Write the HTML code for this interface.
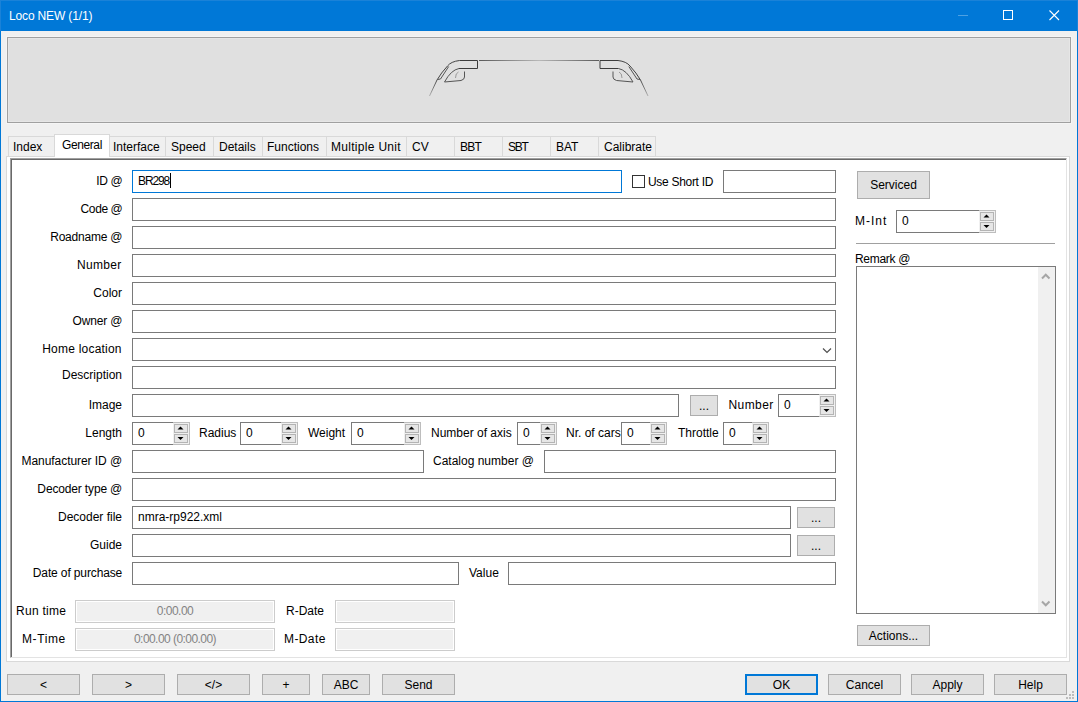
<!DOCTYPE html>
<html><head><meta charset="utf-8"><style>
html,body{margin:0;padding:0;width:1078px;height:702px;overflow:hidden;background:#f0f0f0}
body>div,body>svg{position:absolute;box-sizing:border-box}
.t{font-family:"Liberation Sans",sans-serif;font-size:12px;line-height:14px;color:#000;white-space:nowrap}
</style></head><body>
<div style="left:0px;top:0px;width:1078px;height:702px;background:#f0f0f0;border:1px solid #0078d7;"></div>
<div style="left:0px;top:0px;width:1078px;height:31px;background:#0078d7;border:1px solid #1a82d8;border-bottom:none;"></div>
<div class="t" style="left:9px;top:9px;color:#fff;letter-spacing:-0.15px;">Loco NEW (1/1)</div>
<div style="left:958px;top:15px;width:10px;height:1px;background:#4da1e3;"></div>
<div style="left:1003px;top:10px;width:10px;height:10px;border:1px solid #fff;"></div>
<svg style="left:1049px;top:10px" width="11" height="11"><path d="M0.5 0.5 L10 10 M10 0.5 L0.5 10" stroke="#fff" stroke-width="1.1"/></svg>
<div style="left:6px;top:36px;width:1066px;height:88px;border:1px solid #f5f5f5;"></div>
<div style="left:7px;top:37px;width:1064px;height:86px;background:#e0e0e0;border:1px solid #a0a0a0;box-shadow:inset 0 0 0 1px #e6e6e6;"></div>
<svg style="left:420px;top:50px" width="240" height="55" viewBox="420 50 240 55">
<defs><linearGradient id="rg" gradientUnits="userSpaceOnUse" x1="479" y1="0" x2="599" y2="0"><stop offset="0" stop-color="#5a5a5a"/><stop offset="0.5" stop-color="#b8b8b8"/><stop offset="1" stop-color="#5a5a5a"/></linearGradient>
<linearGradient id="fd" gradientUnits="userSpaceOnUse" x1="0" y1="78" x2="0" y2="96"><stop offset="0" stop-color="#3a3a3a"/><stop offset="1" stop-color="#b0b0b0"/></linearGradient></defs>
<path d="M479 60.5 L599 60.5" stroke="url(#rg)" stroke-width="1" fill="none"/>
<g id="lh" fill="none" stroke="#4a4a4a" stroke-width="1">
<path d="M459.5 60.5 L477.5 60.5 L477.5 68.5 L459 68.5" stroke="#3c3c3c"/>
<path d="M459 68.5 Q451 70 444.5 82 L461 80.5 Q464.5 79.5 464.5 77 L464.5 71.5" stroke="#555"/>
<path d="M458.5 72 Q455.5 73 455.5 78" stroke="#9a9a9a"/>
<path d="M459.5 60.5 Q451 61.5 447.5 66 Q441 73 437 80" stroke="#444"/>
<path d="M437 80 L429.5 96" stroke="url(#fd)"/>
<path d="M448.7 66.5 L440.5 79 L437.5 79.5" stroke="#555"/>
</g>
<use href="#lh" transform="translate(1077.5 0) scale(-1 1)"/>
</svg>
<div style="left:6px;top:156px;width:1064px;height:506px;background:#fff;border:1px solid #d9d9d9;"></div>
<div style="left:8px;top:136px;width:47px;height:21px;background:#f0f0f0;border:1px solid #d9d9d9;"></div>
<div class="t" style="left:13px;top:140px;">Index</div>
<div style="left:109px;top:136px;width:57px;height:21px;background:#f0f0f0;border:1px solid #d9d9d9;"></div>
<div class="t" style="left:113px;top:140px;">Interface</div>
<div style="left:165px;top:136px;width:49px;height:21px;background:#f0f0f0;border:1px solid #d9d9d9;"></div>
<div class="t" style="left:171px;top:140px;">Speed</div>
<div style="left:213px;top:136px;width:50px;height:21px;background:#f0f0f0;border:1px solid #d9d9d9;"></div>
<div class="t" style="left:219px;top:140px;">Details</div>
<div style="left:262px;top:136px;width:65px;height:21px;background:#f0f0f0;border:1px solid #d9d9d9;"></div>
<div class="t" style="left:267px;top:140px;">Functions</div>
<div style="left:326px;top:136px;width:81px;height:21px;background:#f0f0f0;border:1px solid #d9d9d9;"></div>
<div class="t" style="left:331px;top:140px;letter-spacing:0.3px">Multiple Unit</div>
<div style="left:406px;top:136px;width:49px;height:21px;background:#f0f0f0;border:1px solid #d9d9d9;"></div>
<div class="t" style="left:412px;top:140px;">CV</div>
<div style="left:454px;top:136px;width:49px;height:21px;background:#f0f0f0;border:1px solid #d9d9d9;"></div>
<div class="t" style="left:460px;top:140px;letter-spacing:-0.8px">BBT</div>
<div style="left:502px;top:136px;width:49px;height:21px;background:#f0f0f0;border:1px solid #d9d9d9;"></div>
<div class="t" style="left:508px;top:140px;letter-spacing:-1.2px">SBT</div>
<div style="left:550px;top:136px;width:49px;height:21px;background:#f0f0f0;border:1px solid #d9d9d9;"></div>
<div class="t" style="left:556px;top:140px;">BAT</div>
<div style="left:598px;top:136px;width:58px;height:21px;background:#f0f0f0;border:1px solid #d9d9d9;"></div>
<div class="t" style="left:604px;top:140px;">Calibrate</div>
<div style="left:54px;top:134px;width:56px;height:23px;background:#fff;border:1px solid #d9d9d9;border-bottom:none;"></div>
<div class="t" style="left:62px;top:138px;letter-spacing:-0.4px">General</div>
<div style="left:10px;top:158px;width:1057px;height:500px;border-left:1px solid #a0a0a0;border-top:1px solid #a0a0a0;border-right:1px solid #e3e3e3;border-bottom:1px solid #e3e3e3;"></div>
<div style="left:11px;top:159px;width:1055px;height:498px;border-left:1px solid #696969;border-top:1px solid #696969;"></div>
<div class="t" style="right:955.67px;top:174px;text-align:right;letter-spacing:-0.33px">ID @</div>
<div class="t" style="right:955.6px;top:202px;text-align:right;letter-spacing:-0.4px">Code @</div>
<div class="t" style="right:955.78px;top:230px;text-align:right;letter-spacing:-0.22px">Roadname @</div>
<div class="t" style="right:956.35px;top:258px;text-align:right;letter-spacing:0.35px">Number</div>
<div class="t" style="right:956px;top:286px;text-align:right;">Color</div>
<div class="t" style="right:955.83px;top:314px;text-align:right;letter-spacing:-0.17px">Owner @</div>
<div class="t" style="right:956.22px;top:342px;text-align:right;letter-spacing:0.22px">Home location</div>
<div class="t" style="right:956px;top:368px;text-align:right;">Description</div>
<div class="t" style="right:956px;top:398px;text-align:right;">Image</div>
<div class="t" style="right:956px;top:426px;text-align:right;">Length</div>
<div class="t" style="right:955.94px;top:454px;text-align:right;letter-spacing:-0.06px">Manufacturer ID @</div>
<div class="t" style="right:955.85px;top:482px;text-align:right;letter-spacing:-0.15px">Decoder type @</div>
<div class="t" style="right:956px;top:510px;text-align:right;">Decoder file</div>
<div class="t" style="right:956px;top:538px;text-align:right;">Guide</div>
<div class="t" style="right:955.87px;top:566px;text-align:right;letter-spacing:-0.13px">Date of purchase</div>
<div style="left:132px;top:170px;width:490px;height:23px;border:1px solid #7a7a7a;background:#fff;border-color:#0078d7;"></div>
<div class="t" style="left:138px;top:174px;letter-spacing:-1.1px">BR298</div>
<div style="left:170px;top:173px;width:1px;height:15px;background:#000;"></div>
<div style="left:632px;top:175px;width:13px;height:13px;border:1px solid #333;background:#fff;"></div>
<div class="t" style="left:648px;top:175px;letter-spacing:-0.3px">Use Short ID</div>
<div style="left:723px;top:170px;width:113px;height:23px;border:1px solid #7a7a7a;background:#fff;"></div>
<div style="left:132px;top:198px;width:704px;height:23px;border:1px solid #7a7a7a;background:#fff;"></div>
<div style="left:132px;top:226px;width:704px;height:23px;border:1px solid #7a7a7a;background:#fff;"></div>
<div style="left:132px;top:254px;width:704px;height:23px;border:1px solid #7a7a7a;background:#fff;"></div>
<div style="left:132px;top:282px;width:704px;height:23px;border:1px solid #7a7a7a;background:#fff;"></div>
<div style="left:132px;top:310px;width:704px;height:23px;border:1px solid #7a7a7a;background:#fff;"></div>
<div style="left:132px;top:366px;width:704px;height:23px;border:1px solid #7a7a7a;background:#fff;"></div>
<div style="left:132px;top:338px;width:704px;height:23px;border:1px solid #7a7a7a;background:#fff;"></div>
<svg style="left:822px;top:347px" width="11" height="7"><path d="M1 1.5 L5 5.5 L9 1.5" fill="none" stroke="#505050" stroke-width="1.2"/></svg>
<div style="left:132px;top:394px;width:547px;height:23px;border:1px solid #7a7a7a;background:#fff;"></div>
<div style="left:690px;top:395px;width:28px;height:21px;border:1px solid #adadad;background:#e1e1e1;"></div>
<div class="t" style="left:690px;width:28px;top:399px;text-align:center;">...</div>
<div class="t" style="right:304.4px;top:398px;text-align:right;letter-spacing:0.4px">Number</div>
<div style="left:778px;top:394px;width:58px;height:23px;border:1px solid #7a7a7a;background:#fff;"></div>
<div style="left:819px;top:394px;width:17px;height:23px;border:1px solid #bdbdbd;border-left:none;background:#f0f0f0;"></div>
<div style="left:820px;top:396px;width:14px;height:9px;border:1px solid #b4b4b4;background:#e6e6e6;"></div>
<div style="left:820px;top:406px;width:14px;height:9px;border:1px solid #b4b4b4;background:#e6e6e6;"></div>
<svg style="left:820px;top:396px" width="14" height="9"><path d="M3.5 5.5 L9.5 5.5 L6.5 2.5 Z" fill="#000"/></svg>
<svg style="left:820px;top:406px" width="14" height="9"><path d="M3.5 3 L9.5 3 L6.5 6 Z" fill="#000"/></svg>
<div class="t" style="left:784px;top:398px;">0</div>
<div style="left:132px;top:422px;width:58px;height:23px;border:1px solid #7a7a7a;background:#fff;"></div>
<div style="left:173px;top:422px;width:17px;height:23px;border:1px solid #bdbdbd;border-left:none;background:#f0f0f0;"></div>
<div style="left:174px;top:424px;width:14px;height:9px;border:1px solid #b4b4b4;background:#e6e6e6;"></div>
<div style="left:174px;top:434px;width:14px;height:9px;border:1px solid #b4b4b4;background:#e6e6e6;"></div>
<svg style="left:174px;top:424px" width="14" height="9"><path d="M3.5 5.5 L9.5 5.5 L6.5 2.5 Z" fill="#000"/></svg>
<svg style="left:174px;top:434px" width="14" height="9"><path d="M3.5 3 L9.5 3 L6.5 6 Z" fill="#000"/></svg>
<div class="t" style="left:138px;top:426px;">0</div>
<div class="t" style="left:199px;top:426px;">Radius</div>
<div style="left:240px;top:422px;width:58px;height:23px;border:1px solid #7a7a7a;background:#fff;"></div>
<div style="left:281px;top:422px;width:17px;height:23px;border:1px solid #bdbdbd;border-left:none;background:#f0f0f0;"></div>
<div style="left:282px;top:424px;width:14px;height:9px;border:1px solid #b4b4b4;background:#e6e6e6;"></div>
<div style="left:282px;top:434px;width:14px;height:9px;border:1px solid #b4b4b4;background:#e6e6e6;"></div>
<svg style="left:282px;top:424px" width="14" height="9"><path d="M3.5 5.5 L9.5 5.5 L6.5 2.5 Z" fill="#000"/></svg>
<svg style="left:282px;top:434px" width="14" height="9"><path d="M3.5 3 L9.5 3 L6.5 6 Z" fill="#000"/></svg>
<div class="t" style="left:246px;top:426px;">0</div>
<div class="t" style="left:308px;top:426px;">Weight</div>
<div style="left:351px;top:422px;width:70px;height:23px;border:1px solid #7a7a7a;background:#fff;"></div>
<div style="left:404px;top:422px;width:17px;height:23px;border:1px solid #bdbdbd;border-left:none;background:#f0f0f0;"></div>
<div style="left:405px;top:424px;width:14px;height:9px;border:1px solid #b4b4b4;background:#e6e6e6;"></div>
<div style="left:405px;top:434px;width:14px;height:9px;border:1px solid #b4b4b4;background:#e6e6e6;"></div>
<svg style="left:405px;top:424px" width="14" height="9"><path d="M3.5 5.5 L9.5 5.5 L6.5 2.5 Z" fill="#000"/></svg>
<svg style="left:405px;top:434px" width="14" height="9"><path d="M3.5 3 L9.5 3 L6.5 6 Z" fill="#000"/></svg>
<div class="t" style="left:357px;top:426px;">0</div>
<div class="t" style="left:431px;top:426px;">Number of axis</div>
<div style="left:517px;top:422px;width:40px;height:23px;border:1px solid #7a7a7a;background:#fff;"></div>
<div style="left:540px;top:422px;width:17px;height:23px;border:1px solid #bdbdbd;border-left:none;background:#f0f0f0;"></div>
<div style="left:541px;top:424px;width:14px;height:9px;border:1px solid #b4b4b4;background:#e6e6e6;"></div>
<div style="left:541px;top:434px;width:14px;height:9px;border:1px solid #b4b4b4;background:#e6e6e6;"></div>
<svg style="left:541px;top:424px" width="14" height="9"><path d="M3.5 5.5 L9.5 5.5 L6.5 2.5 Z" fill="#000"/></svg>
<svg style="left:541px;top:434px" width="14" height="9"><path d="M3.5 3 L9.5 3 L6.5 6 Z" fill="#000"/></svg>
<div class="t" style="left:523px;top:426px;">0</div>
<div class="t" style="left:566px;top:426px;width:55px;overflow:hidden">Nr. of cars</div>
<div style="left:621px;top:422px;width:46px;height:23px;border:1px solid #7a7a7a;background:#fff;"></div>
<div style="left:650px;top:422px;width:17px;height:23px;border:1px solid #bdbdbd;border-left:none;background:#f0f0f0;"></div>
<div style="left:651px;top:424px;width:14px;height:9px;border:1px solid #b4b4b4;background:#e6e6e6;"></div>
<div style="left:651px;top:434px;width:14px;height:9px;border:1px solid #b4b4b4;background:#e6e6e6;"></div>
<svg style="left:651px;top:424px" width="14" height="9"><path d="M3.5 5.5 L9.5 5.5 L6.5 2.5 Z" fill="#000"/></svg>
<svg style="left:651px;top:434px" width="14" height="9"><path d="M3.5 3 L9.5 3 L6.5 6 Z" fill="#000"/></svg>
<div class="t" style="left:627px;top:426px;">0</div>
<div class="t" style="left:678px;top:426px;">Throttle</div>
<div style="left:723px;top:422px;width:46px;height:23px;border:1px solid #7a7a7a;background:#fff;"></div>
<div style="left:752px;top:422px;width:17px;height:23px;border:1px solid #bdbdbd;border-left:none;background:#f0f0f0;"></div>
<div style="left:753px;top:424px;width:14px;height:9px;border:1px solid #b4b4b4;background:#e6e6e6;"></div>
<div style="left:753px;top:434px;width:14px;height:9px;border:1px solid #b4b4b4;background:#e6e6e6;"></div>
<svg style="left:753px;top:424px" width="14" height="9"><path d="M3.5 5.5 L9.5 5.5 L6.5 2.5 Z" fill="#000"/></svg>
<svg style="left:753px;top:434px" width="14" height="9"><path d="M3.5 3 L9.5 3 L6.5 6 Z" fill="#000"/></svg>
<div class="t" style="left:729px;top:426px;">0</div>
<div style="left:132px;top:450px;width:292px;height:23px;border:1px solid #7a7a7a;background:#fff;"></div>
<div class="t" style="left:433px;top:454px;">Catalog number @</div>
<div style="left:544px;top:450px;width:292px;height:23px;border:1px solid #7a7a7a;background:#fff;"></div>
<div style="left:132px;top:478px;width:704px;height:23px;border:1px solid #7a7a7a;background:#fff;"></div>
<div style="left:132px;top:506px;width:659px;height:23px;border:1px solid #7a7a7a;background:#fff;"></div>
<div class="t" style="left:138px;top:510px;">nmra-rp922.xml</div>
<div style="left:797px;top:507px;width:38px;height:21px;border:1px solid #adadad;background:#e1e1e1;"></div>
<div class="t" style="left:797px;width:38px;top:511px;text-align:center;">...</div>
<div style="left:132px;top:534px;width:659px;height:23px;border:1px solid #7a7a7a;background:#fff;"></div>
<div style="left:797px;top:535px;width:38px;height:21px;border:1px solid #adadad;background:#e1e1e1;"></div>
<div class="t" style="left:797px;width:38px;top:539px;text-align:center;">...</div>
<div style="left:132px;top:562px;width:327px;height:23px;border:1px solid #7a7a7a;background:#fff;"></div>
<div class="t" style="left:469px;top:566px;">Value</div>
<div style="left:508px;top:562px;width:328px;height:23px;border:1px solid #7a7a7a;background:#fff;"></div>
<div class="t" style="left:16px;top:604px;letter-spacing:0.28px">Run time</div>
<div style="left:75px;top:600px;width:200px;height:23px;border:1px solid #cccccc;background:#f0f0f0;box-shadow:inset 0 0 0 1px #fff;"></div>
<div class="t" style="left:75px;width:200px;top:604px;text-align:center;color:#838383;letter-spacing:-0.5px;">0:00.00</div>
<div class="t" style="left:286px;top:604px;">R-Date</div>
<div style="left:335px;top:600px;width:120px;height:23px;border:1px solid #cccccc;background:#f0f0f0;box-shadow:inset 0 0 0 1px #fff;"></div>
<div class="t" style="left:22px;top:632px;letter-spacing:0.6px">M-Time</div>
<div style="left:75px;top:628px;width:200px;height:23px;border:1px solid #cccccc;background:#f0f0f0;box-shadow:inset 0 0 0 1px #fff;"></div>
<div class="t" style="left:75px;width:200px;top:632px;text-align:center;color:#838383;letter-spacing:-0.55px;">0:00.00 (0:00.00)</div>
<div class="t" style="left:284px;top:632px;letter-spacing:0.4px">M-Date</div>
<div style="left:335px;top:628px;width:120px;height:23px;border:1px solid #cccccc;background:#f0f0f0;box-shadow:inset 0 0 0 1px #fff;"></div>
<div style="left:857px;top:171px;width:73px;height:28px;border:1px solid #adadad;background:#e1e1e1;"></div>
<div class="t" style="left:857px;width:73px;top:178px;text-align:center;">Serviced</div>
<div class="t" style="left:855px;top:214px;letter-spacing:1px">M-Int</div>
<div style="left:896px;top:210px;width:100px;height:23px;border:1px solid #7a7a7a;background:#fff;"></div>
<div style="left:979px;top:210px;width:17px;height:23px;border:1px solid #bdbdbd;border-left:none;background:#f0f0f0;"></div>
<div style="left:980px;top:212px;width:14px;height:9px;border:1px solid #b4b4b4;background:#e6e6e6;"></div>
<div style="left:980px;top:222px;width:14px;height:9px;border:1px solid #b4b4b4;background:#e6e6e6;"></div>
<svg style="left:980px;top:212px" width="14" height="9"><path d="M3.5 5.5 L9.5 5.5 L6.5 2.5 Z" fill="#000"/></svg>
<svg style="left:980px;top:222px" width="14" height="9"><path d="M3.5 3 L9.5 3 L6.5 6 Z" fill="#000"/></svg>
<div class="t" style="left:902px;top:214px;">0</div>
<div style="left:856px;top:243px;width:199px;height:1px;background:#a0a0a0;"></div>
<div class="t" style="left:855px;top:252px;letter-spacing:-0.3px">Remark @</div>
<div style="left:856px;top:266px;width:200px;height:348px;border:1px solid #7a7a7a;background:#fff;"></div>
<div style="left:1038px;top:267px;width:17px;height:346px;background:#f0f0f0;"></div>
<svg style="left:1041px;top:273px" width="10" height="7"><path d="M1 5.5 L4.75 1.75 L8.5 5.5" fill="none" stroke="#a6a6a6" stroke-width="2"/></svg>
<svg style="left:1041px;top:600px" width="10" height="7"><path d="M1 1.5 L4.75 5.25 L8.5 1.5" fill="none" stroke="#a6a6a6" stroke-width="2"/></svg>
<div style="left:857px;top:625px;width:73px;height:21px;border:1px solid #adadad;background:#e1e1e1;"></div>
<div class="t" style="left:857px;width:73px;top:629px;text-align:center;">Actions...</div>
<div style="left:7px;top:674px;width:73px;height:21px;border:1px solid #adadad;background:#e1e1e1;"></div>
<div class="t" style="left:7px;width:73px;top:678px;text-align:center;">&lt;</div>
<div style="left:92px;top:674px;width:73px;height:21px;border:1px solid #adadad;background:#e1e1e1;"></div>
<div class="t" style="left:92px;width:73px;top:678px;text-align:center;">&gt;</div>
<div style="left:177px;top:674px;width:73px;height:21px;border:1px solid #adadad;background:#e1e1e1;"></div>
<div class="t" style="left:177px;width:73px;top:678px;text-align:center;">&lt;/&gt;</div>
<div style="left:262px;top:674px;width:48px;height:21px;border:1px solid #adadad;background:#e1e1e1;"></div>
<div class="t" style="left:262px;width:48px;top:678px;text-align:center;">+</div>
<div style="left:322px;top:674px;width:48px;height:21px;border:1px solid #adadad;background:#e1e1e1;"></div>
<div class="t" style="left:322px;width:48px;top:678px;text-align:center;">ABC</div>
<div style="left:382px;top:674px;width:73px;height:21px;border:1px solid #adadad;background:#e1e1e1;"></div>
<div class="t" style="left:382px;width:73px;top:678px;text-align:center;">Send</div>
<div style="left:828px;top:674px;width:73px;height:21px;border:1px solid #adadad;background:#e1e1e1;"></div>
<div class="t" style="left:828px;width:73px;top:678px;text-align:center;">Cancel</div>
<div style="left:911px;top:674px;width:73px;height:21px;border:1px solid #adadad;background:#e1e1e1;"></div>
<div class="t" style="left:911px;width:73px;top:678px;text-align:center;">Apply</div>
<div style="left:994px;top:674px;width:73px;height:21px;border:1px solid #adadad;background:#e1e1e1;"></div>
<div class="t" style="left:994px;width:73px;top:678px;text-align:center;">Help</div>
<div style="left:745px;top:674px;width:73px;height:21px;border:2px solid #0078d7;background:#e1e1e1;"></div>
<div class="t" style="left:745px;width:73px;top:678px;text-align:center;">OK</div>
<div style="left:1072px;top:691px;width:2px;height:2px;background:#bcbcbc;"></div>
<div style="left:1069px;top:694px;width:2px;height:2px;background:#bcbcbc;"></div>
<div style="left:1072px;top:694px;width:2px;height:2px;background:#bcbcbc;"></div>
<div style="left:1066px;top:697px;width:2px;height:2px;background:#bcbcbc;"></div>
<div style="left:1069px;top:697px;width:2px;height:2px;background:#bcbcbc;"></div>
<div style="left:1072px;top:697px;width:2px;height:2px;background:#bcbcbc;"></div>
</body></html>
